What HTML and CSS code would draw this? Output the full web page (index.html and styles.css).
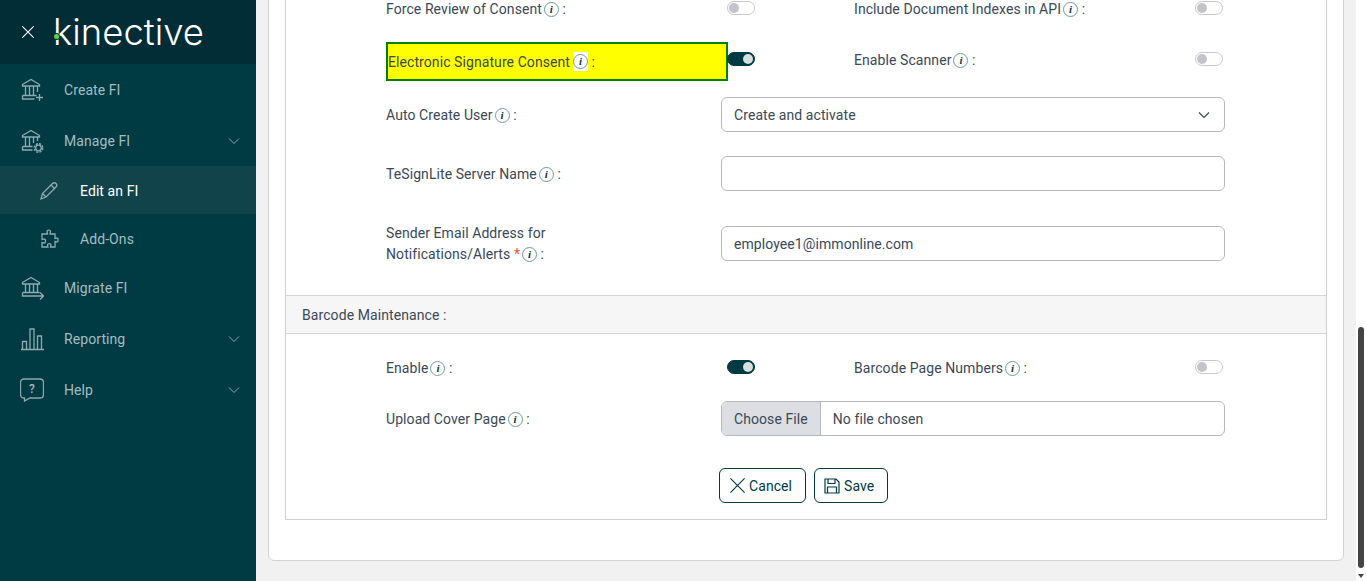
FILE: index.html
```html
<!DOCTYPE html>
<html lang="en">
<head>
    <meta charset="UTF-8">
    <meta name="viewport" content="width=device-width, initial-scale=1.0">
    <title>Edit an FI</title>
    <link rel="stylesheet" href="styles.css">
</head>
<body>

    <aside class="sidebar">
        <div class="brand">
            <svg class="brand-close" viewBox="0 0 16 16"><path d="M1.500 1.500 14.500 14.500M14.500 1.500 1.500 14.500"/></svg>
            <div class="logo"><span class="logo-dot"></span>kinective</div>
        </div>
        <nav class="menu">
            <a class="menu-item">
                <svg class="menu-icon" viewBox="0 0 24 24"><path d="M2.500 6.500 11 1.500l8.500 5v1.500h-17zM5.500 8v9M9.500 8v9M13.500 8v9M17.500 8v6M2.500 17.500h14M2.500 17.500v3.500h12M19.500 16v7M16 19.500h7"/></svg>
                <span>Create FI</span>
            </a>
            <a class="menu-item">
                <svg class="menu-icon" viewBox="0 0 24 24"><path d="M2.500 6.500 11 1.500l8.500 5v1.500h-17zM5.500 8v9M9.500 8v9M13.500 8v6M17.500 8v4M2.500 17.500h10M2.500 17.500v3.500h10"/><circle cx="18.500" cy="19" r="2.800"/><circle cx="18.500" cy="19" r="4.300" stroke-dasharray="2.200 1.180"/></svg>
                <span>Manage FI</span>
                <svg class="menu-chevron" viewBox="0 0 12 8"><path d="M1 1.500 6 6.500 11 1.500"/></svg>
            </a>
            <a class="menu-item sub active">
                <svg class="menu-icon small" viewBox="0 0 20 20"><path d="M2 18 3.500 12.500 13.500 2.500c1-1 2.500-1 3.500 0s1 2.500 0 3.500L7 16zM3.500 12.500 7 16M12 4l4 4"/></svg>
                <span>Edit an FI</span>
            </a>
            <a class="menu-item sub">
                <svg class="menu-icon small" viewBox="0 0 20 20"><path d="M8 2.500c0-1.800 3.500-1.800 3.500 0 0 1-.5 1.500-.5 2.500h5v4.500c1 0 1.500-.5 2-.5 1.500 0 1.500 4 0 4-.5 0-1-.5-2-.5V18h-4.500c0-1 .5-1.500.5-2 0-1.800-3.500-1.800-3.500 0 0 .5.500 1 .5 2H3v-4.500c1 0 1.500.5 2.200.5 1.800 0 1.800-4 0-4-.7 0-1.200.5-2.200.5V5h5.500c0-1-.5-1.500-.5-2.500z"/></svg>
                <span>Add-Ons</span>
            </a>
            <a class="menu-item">
                <svg class="menu-icon" viewBox="0 0 24 24"><path d="M2.500 6.500 11 1.500l8.500 5v1.500h-17zM5.500 8v8M9.500 8v8M13.500 8v8M17.500 8v8M2.500 16.500h17M2.500 16.500v3.500h21M20 16.500l3.500 3.500-3.500 3.500"/></svg>
                <span>Migrate FI</span>
            </a>
            <a class="menu-item">
                <svg class="menu-icon" viewBox="0 0 24 24"><path d="M1 22.500h23M2.500 22.500v-8h4v8M10 22.500V2h4v20.500M17.500 22.500V9h4v13.500"/></svg>
                <span>Reporting</span>
                <svg class="menu-chevron" viewBox="0 0 12 8"><path d="M1 1.500 6 6.500 11 1.500"/></svg>
            </a>
            <a class="menu-item">
                <svg class="menu-icon" viewBox="0 0 24 24"><path d="M4 1h16c2 0 3.500 1.500 3.500 3.500v12c0 2-1.500 3.500-3.500 3.500H10l-5.500 3v-3H4c-2 0-3.500-1.500-3.500-3.500v-12C.5 2.500 2 1 4 1z"/><text x="12" y="15" class="help-mark">?</text></svg>
                <span>Help</span>
                <svg class="menu-chevron" viewBox="0 0 12 8"><path d="M1 1.500 6 6.500 11 1.500"/></svg>
            </a>
        </nav>
    </aside>

    <main class="content">
        <div class="card">
            <div class="panel">
                <div class="panel-body top-body">
                    <div class="toggle-row first">
                        <label class="field-label">Force Review of Consent<i class="info">i</i> :</label>
                        <span class="toggle"></span>
                        <label class="field-label">Include Document Indexes in API<i class="info">i</i> :</label>
                        <span class="toggle"></span>
                    </div>
                    <div class="toggle-row second">
                        <label class="field-label marked">Electronic Signature Consent<span class="info-box"><i class="info">i</i></span> :</label>
                        <span class="toggle on"></span>
                        <label class="field-label">Enable Scanner<i class="info">i</i> :</label>
                        <span class="toggle"></span>
                    </div>
                    <div class="input-row auto-user">
                        <label class="field-label">Auto Create User<i class="info">i</i> :</label>
                        <div class="select-box">
                            <span>Create and activate</span>
                            <svg viewBox="0 0 12 8"><path d="M1 1.500 6 6.500 11 1.500"/></svg>
                        </div>
                    </div>
                    <div class="input-row server-name">
                        <label class="field-label">TeSignLite Server Name<i class="info">i</i> :</label>
                        <input class="text-box" type="text">
                    </div>
                    <div class="input-row sender">
                        <label class="field-label">
                            <span class="label-line">Sender Email Address for</span>
                            <span class="label-line">Notifications/Alerts <b class="req">*</b><i class="info">i</i> :</span>
                        </label>
                        <input class="text-box" type="text" value="employee1@immonline.com">
                    </div>
                </div>

                <div class="panel-head">Barcode Maintenance :</div>

                <div class="panel-body lower-body">
                    <div class="toggle-row enable">
                        <label class="field-label">Enable<i class="info">i</i> :</label>
                        <span class="toggle on"></span>
                        <label class="field-label">Barcode Page Numbers<i class="info">i</i> :</label>
                        <span class="toggle"></span>
                    </div>
                    <div class="input-row cover">
                        <label class="field-label">Upload Cover Page<i class="info">i</i> :</label>
                        <div class="file-box">
                            <span class="file-btn">Choose File</span>
                            <span class="file-name">No file chosen</span>
                        </div>
                    </div>
                    <div class="actions">
                        <button class="btn" type="button">
                            <svg class="cancel-icon" viewBox="0 0 18 18"><path d="M1.500 1.500 16.500 16.500M16.500 1.500 1.500 16.500"/></svg>
                            Cancel
                        </button>
                        <button class="btn" type="button">
                            <svg class="save-icon" viewBox="0 0 16 16"><path d="M1 1h11l3 3v11H1zM4 1v4.500h7V1M3.500 15V9h9v6"/></svg>
                            Save
                        </button>
                    </div>
                </div>
            </div>
        </div>
    </main>

    <div class="scrollbar">
        <div class="scroll-thumb"></div>
        <div class="scroll-arrow"></div>
    </div>

</body>
</html>
```

FILE: styles.css
```css
* {
    box-sizing: border-box;
}

html, body {
    height: 100%;
}

body {
    margin: 0;
    display: flex;
    overflow: hidden;
    font-family: Roboto, 'Liberation Sans', sans-serif;
    font-size: 14px;
    letter-spacing: 0.08px;
    color: #3b4859;
    background: #f1f1f1;
}

/* Sidebar */
.sidebar {
    width: 256px;
    flex-shrink: 0;
    background: #003a43;
}

.brand {
    height: 64px;
    display: flex;
    align-items: center;
    padding-left: 21px;
    background: #022d37;
}

.brand-close {
    width: 14px;
    height: 14px;
    fill: none;
    stroke: #ffffff;
    stroke-width: 1.300;
}

.logo {
    position: relative;
    margin-left: 18px;
    margin-top: -1px;
    font-family: Inter, sans-serif;
    font-weight: 300;
    font-size: 36.500px;
    line-height: 40px;
    letter-spacing: 0;
    color: #ffffff;
}

.logo-dot {
    position: absolute;
    left: 1px;
    top: 22px;
    width: 5px;
    height: 5px;
    border-radius: 50%;
    background: #5fd23f;
    box-shadow: 0 0 0 1px #022d37;
}

.menu-item {
    height: 51px;
    display: flex;
    align-items: center;
    padding-left: 20px;
    color: #a3bdc1;
}

.menu-item.sub {
    height: 48px;
    padding-top: 1px;
    padding-left: 39px;
}

.menu-item.active {
    background: #11444a;
    color: #ffffff;
}

.menu-icon {
    width: 24px;
    height: 24px;
    margin-right: 20px;
    flex-shrink: 0;
    fill: none;
    stroke: #8fabb0;
    stroke-width: 1.300;
}

.menu-icon.small {
    width: 20px;
    height: 20px;
    margin-right: 21px;
}

.help-mark {
    font-family: Roboto, sans-serif;
    font-size: 12px;
    font-weight: 500;
    text-anchor: middle;
    fill: #a3bdc1;
    stroke: none;
}

.menu-chevron {
    width: 12px;
    height: 8px;
    margin-left: auto;
    margin-right: 16px;
    fill: none;
    stroke: #8fabb0;
    stroke-width: 1;
}

/* Main area, scrolled to the bottom */
.content {
    flex: 1;
    min-width: 0;
    height: 100%;
    padding: 0 12px 20px;
    display: flex;
    flex-direction: column;
    justify-content: flex-end;
    overflow: hidden;
}

.card {
    background: #ffffff;
    border: 1px solid #d2d2d2;
    border-radius: 6px;
    padding: 0 16px 40px;
    flex-shrink: 0;
}

.panel {
    border: 1px solid #cfcfcf;
    border-top: 0;
}

.panel-body {
    padding-left: 100px;
}

/* the form goes on above the fold, this keeps the card edge out of view */
.top-body {
    padding-top: 60px;
}

.lower-body {
    padding-top: 17px;
}

.panel-head {
    height: 39px;
    padding-left: 16px;
    display: flex;
    align-items: center;
    background: #f6f6f6;
    border-top: 1px solid #d6d6d6;
    border-bottom: 1px solid #d6d6d6;
}

.toggle-row {
    display: grid;
    grid-template-columns: 341px 127px 341px 28px;
    align-items: center;
}

.toggle-row.first {
    height: 34px;
    margin-bottom: 17px;
}

.first > .field-label {
    margin-top: 2px;
}

.toggle-row.second {
    height: 39px;
    margin-bottom: 16px;
}

.toggle-row.enable {
    height: 34px;
    margin-bottom: 16px;
}

.input-row {
    display: grid;
    grid-template-columns: 335px 504px;
    align-items: center;
}

.auto-user {
    margin-bottom: 24px;
}

.server-name {
    margin-bottom: 31px;
}

.sender {
    margin-bottom: 30px;
}

.field-label {
    line-height: 21px;
    padding-top: 1px;
}

.label-line {
    display: block;
}

.field-label.marked {
    height: 39px;
    width: 342px;
    padding-top: 2px;
    display: flex;
    align-items: center;
    white-space: pre;
    background: #ffff00;
    border: 2px solid #008000;
}

.info-box {
    height: 19px;
    width: 15px;
    margin-left: 3px;
    margin-top: -2px;
    display: flex;
    align-items: center;
    background: #ffffff;
}

.info-box .info {
    margin-left: 0;
    vertical-align: 0;
}

.req {
    color: #e5533d;
    font-weight: 400;
}

.info {
    display: inline-block;
    width: 15px;
    height: 15px;
    margin-left: 2px;
    border: 1px solid #6f99a3;
    border-radius: 50%;
    font-family: 'Liberation Serif', serif;
    font-size: 11px;
    font-weight: 700;
    font-style: italic;
    line-height: 13px;
    text-align: center;
    color: #12343f;
    vertical-align: 1px;
}

.toggle {
    position: relative;
    z-index: 1;
    justify-self: start;
    width: 28px;
    height: 14px;
    border: 1px solid #c9c9cf;
    border-radius: 7px;
    background: #ffffff;
}

.toggle::before {
    content: "";
    position: absolute;
    left: 1px;
    top: 1px;
    width: 10px;
    height: 10px;
    border-radius: 50%;
    background: #c3c3cb;
}

.toggle.on {
    background: #003a43;
    border-color: #003a43;
}

.toggle.on::before {
    left: auto;
    right: 1px;
    background: #d9dfe0;
}

.second > .toggle {
    margin-top: -5px;
}

.second > .field-label:not(.marked) {
    margin-top: -3px;
}

.enable > .toggle {
    margin-top: -2px;
}

.select-box,
.text-box {
    width: 504px;
    height: 35px;
    border: 1px solid #b5b8c2;
    border-radius: 6px;
    background: #ffffff;
    padding: 0 12px;
    font-family: inherit;
    font-size: 14px;
    letter-spacing: inherit;
    color: #3b4859;
}

.select-box {
    display: flex;
    align-items: center;
    justify-content: space-between;
    padding-right: 14px;
}

.select-box svg {
    width: 12px;
    height: 8px;
    fill: none;
    stroke: #3b4859;
    stroke-width: 1.200;
}

.file-box {
    width: 504px;
    height: 35px;
    display: flex;
    align-items: center;
    border: 1px solid #b5b8c2;
    border-radius: 6px;
    overflow: hidden;
}

.file-btn {
    height: 100%;
    padding: 0 12px;
    display: flex;
    align-items: center;
    background: #dcdee3;
    border-right: 1px solid #b5b8c2;
}

.file-name {
    padding-left: 12px;
}

.actions {
    display: flex;
    gap: 8px;
    margin-top: 32px;
    margin-left: 333px;
    margin-bottom: 16px;
}

.btn {
    height: 35px;
    display: flex;
    align-items: center;
    gap: 5px;
    padding: 0 13px 0 9px;
    border: 1px solid #003a43;
    border-radius: 6px;
    background: #ffffff;
    font-family: inherit;
    font-size: 14px;
    letter-spacing: inherit;
    color: #003a43;
}

.btn svg {
    width: 16px;
    height: 16px;
    fill: none;
    stroke: #003a43;
    stroke-width: 1.200;
}

.btn .cancel-icon {
    width: 17px;
    height: 17px;
    margin-right: -2px;
}

.btn .save-icon {
    margin-right: -1px;
}

/* Scrollbar */
.scrollbar {
    width: 10px;
    flex-shrink: 0;
    background: #ffffff;
    display: flex;
    flex-direction: column;
    align-items: center;
    justify-content: flex-end;
    padding-bottom: 3px;
}

.scroll-thumb {
    width: 6px;
    height: 241px;
    border-radius: 3px;
    background: #444444;
}

.scroll-arrow {
    margin-top: 6px;
    width: 0;
    height: 0;
    border-left: 3px solid transparent;
    border-right: 3px solid transparent;
    border-top: 4px solid #444444;
}
```
